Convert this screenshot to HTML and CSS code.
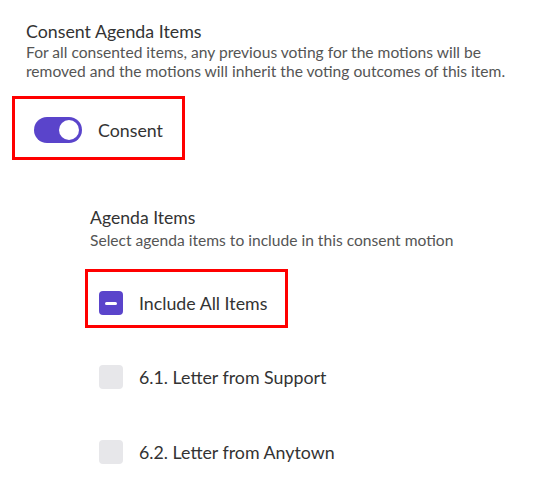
FILE: index.html
```html
<!DOCTYPE html>
<html>
<head>
<meta charset="utf-8">
<link rel="stylesheet" href="styles.css">
</head>
<body>
<div class="page">
  <div class="header">
    <div class="title">Consent Agenda Items</div>
    <div class="desc">For all consented items, any previous voting for the motions will be removed and the motions will inherit the voting outcomes of this item.</div>
  </div>
  <div class="highlight toggle-box">
    <span class="toggle"><span class="knob"></span></span>
    <span class="label">Consent</span>
  </div>
  <div class="agenda">
    <div class="sub-title">Agenda Items</div>
    <div class="sub-desc">Select agenda items to include in this consent motion</div>
    <div class="highlight all-box">
      <div class="row">
        <span class="check checked"><span class="dash"></span></span>
        <span class="label">Include All Items</span>
      </div>
    </div>
    <div class="items">
      <div class="row">
        <span class="check"></span>
        <span class="label">6.1. Letter from Support</span>
      </div>
      <div class="row">
        <span class="check"></span>
        <span class="label">6.2. Letter from Anytown</span>
      </div>
    </div>
  </div>
</div>
</body>
</html>
```
FILE: styles.css
```css
html, body {
  margin: 0;
  padding: 0;
  background: #ffffff;
}
body {
  font-family: Lato, "Open Sans", sans-serif;
  color: #333333;
}
.page {
  padding: 20px 0 0 12px;
}
.header {
  padding-left: 14px;
}
.title {
  font-size: 17.8px;
  line-height: 22px;
  color: #333333;
}
.desc {
  font-size: 15.6px;
  line-height: 19px;
  color: #555555;
  margin-top: 1px;
  width: 486px;
}
.highlight {
  border: 3px solid #ff0000;
  box-sizing: border-box;
}
.toggle-box {
  display: inline-flex;
  align-items: center;
  margin-top: 15px;
  width: 173px;
  height: 64px;
  padding: 4px 0 0 19px;
}
.toggle {
  width: 48px;
  height: 26px;
  border-radius: 13px;
  background: #5a44cb;
  display: inline-flex;
  align-items: center;
  justify-content: flex-end;
  padding: 0 3px;
  box-sizing: border-box;
}
.knob {
  width: 20px;
  height: 20px;
  border-radius: 50%;
  background: #ffffff;
}
.toggle-box .label {
  margin-left: 16px;
  font-size: 17.8px;
  line-height: 22px;
  color: #333333;
}
.agenda {
  margin-top: 48px;
  padding-left: 78px;
}
.sub-title {
  font-size: 17.6px;
  line-height: 20px;
  color: #333333;
}
.sub-desc {
  font-size: 15.6px;
  line-height: 18px;
  color: #555555;
  margin-top: 3px;
}
.all-box {
  margin-top: 20px;
  margin-left: -5px;
  width: 203px;
  height: 59px;
  padding: 19px 0 0 11px;
}
.row {
  display: flex;
  align-items: center;
  gap: 16px;
}
.row .label {
  font-size: 17.8px;
  line-height: 22px;
  color: #333333;
}
.check {
  width: 24px;
  height: 24px;
  border-radius: 4px;
  background: #e7e7ea;
  display: inline-flex;
  align-items: center;
  justify-content: center;
  flex: none;
}
.check.checked {
  background: #5a44cb;
}
.dash {
  width: 12px;
  height: 3px;
  border-radius: 2px;
  background: #ffffff;
}
.items {
  display: flex;
  flex-direction: column;
  gap: 51px;
  margin-top: 37px;
  padding-left: 9px;
}
```
